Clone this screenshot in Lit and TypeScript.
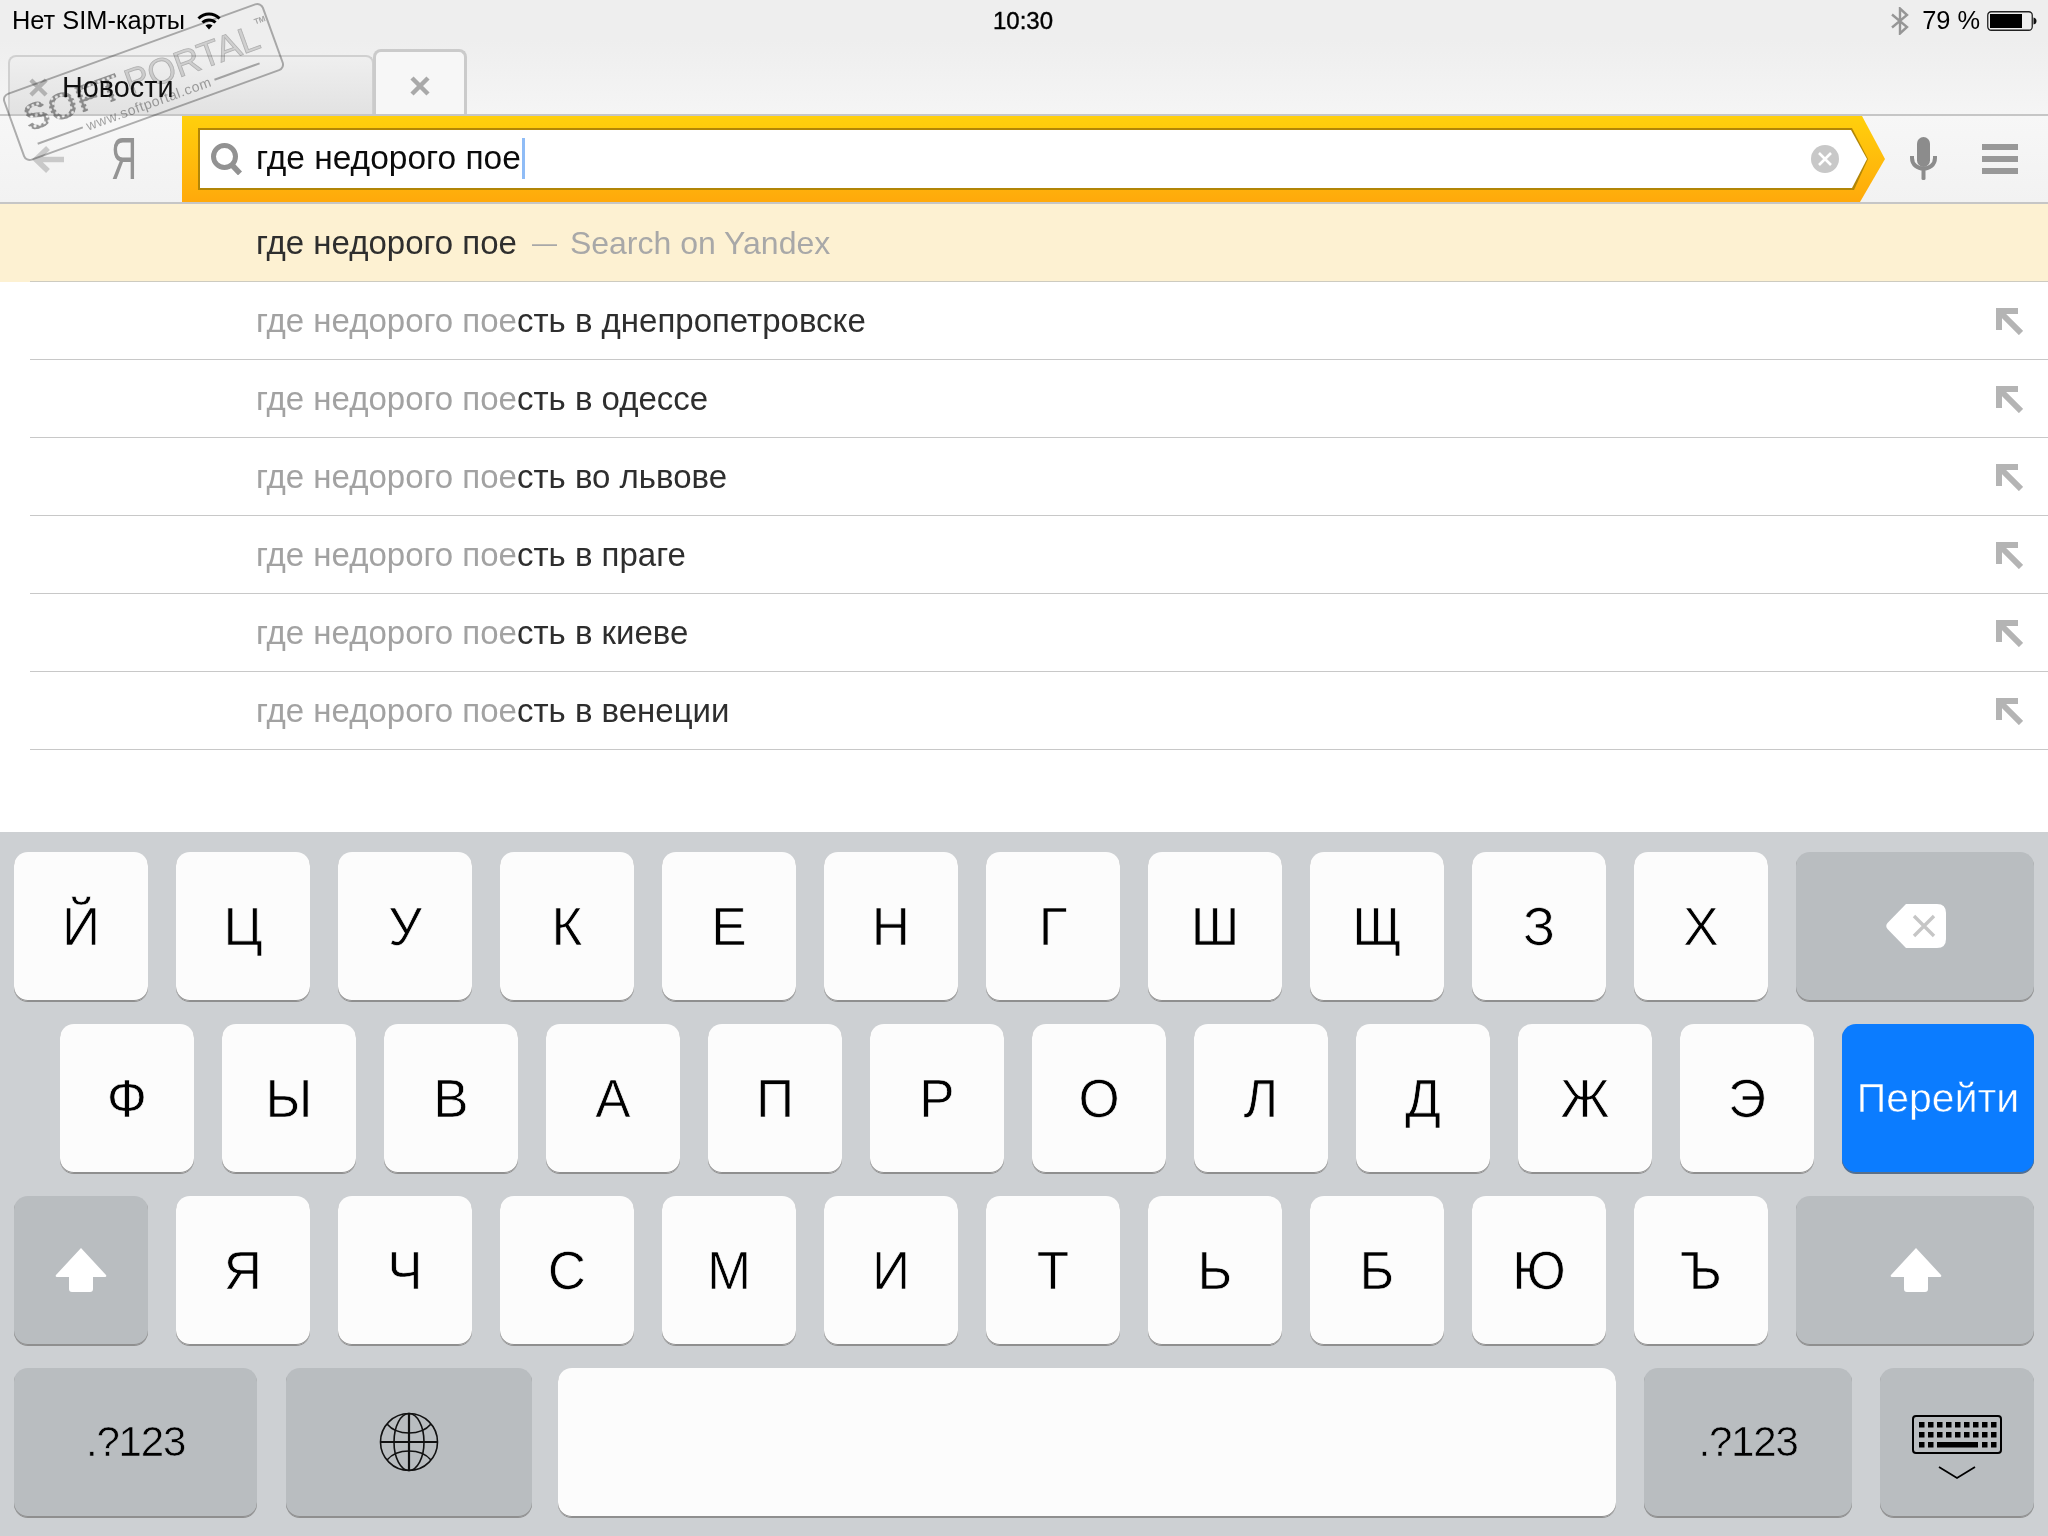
import { LitElement, html, css, svg } from "lit";
import { customElement } from "lit/decorators.js";

const suggestions = [
  "сть в днепропетровске",
  "сть в одессе",
  "сть во львове",
  "сть в праге",
  "сть в киеве",
  "сть в венеции",
];
const row1 = ["Й", "Ц", "У", "К", "Е", "Н", "Г", "Ш", "Щ", "З", "Х"];
const row2 = ["Ф", "Ы", "В", "А", "П", "Р", "О", "Л", "Д", "Ж", "Э"];
const row3 = ["Я", "Ч", "С", "М", "И", "Т", "Ь", "Б", "Ю", "Ъ"];

const shiftIcon = svg`<svg width="52" height="46" viewBox="0 0 52 46"><path fill="#fff" d="M26 1 L51 28 Q52 30 50 30 H38 V42 Q38 45 35 45 H17 Q14 45 14 42 V30 H2 Q0 30 1 28 Z"/></svg>`;

@customElement("app-root")
export class AppRoot extends LitElement {
  static styles = css`
    :host { display: block; width: 2048px; height: 1536px; position: relative; overflow: hidden; background: #fff; font-family: "Liberation Sans", Arial, sans-serif; color: #000; }
    .page { display: flex; flex-direction: column; height: 1536px; }
    .chrome { height: 114px; flex: none; background: linear-gradient(#eeeeee, #eeeeee 40px, #f5f5f5); display: flex; flex-direction: column; border-bottom: 2px solid #c6c6c6; }
    .status { height: 41px; flex: none; padding: 0 11px 0 12px; display: grid; grid-template-columns: 1fr auto 1fr; align-items: center; font-size: 25.4px; }
    .status-left, .status-right { display: flex; align-items: center; }
    .status-left { gap: 12px; }
    .status-right { justify-content: flex-end; }
    .time { font-size: 24px; -webkit-text-stroke: 0.4px #000; padding-right: 3px; }
    .pct { margin: 0 7px 0 12px; font-size: 25.4px; }
    .tabs { flex: 1; display: flex; align-items: flex-end; padding-left: 8px; }
    .tab { box-sizing: border-box; height: 59px; width: 366px; border: 2px solid #d0d0d0; border-bottom: none; border-radius: 8px 8px 0 0; background: linear-gradient(#efefef, #e2e2e2); display: flex; align-items: center; padding: 4px 0 0 19px; gap: 14px; font-size: 28.8px; color: #111; }
    .tab.active { width: 94px; height: 65px; margin-left: -1px; border: 3px solid #cbcbcb; border-bottom: none; background: #f7f7f7; justify-content: center; padding: 5px 0 0; }
    .toolbar { height: 86px; flex: none; display: flex; background: linear-gradient(#f7f7f7, #f2f2f2); border-bottom: 2px solid #c6c6c6; }
    .nav { width: 182px; flex: none; display: flex; align-items: center; padding-left: 32px; box-sizing: border-box; gap: 47px; }
    .logo { display: block; width: 21px; font-size: 60px; line-height: 46px; color: #949494; transform: scaleX(0.6); transform-origin: left center; }
    .search { width: 1703px; flex: none; box-sizing: border-box; padding: 12px 17px 12px 16px; background: linear-gradient(#ffd00c, #ffa90b); clip-path: polygon(0 0, 1680px 0, 100% 50%, 1678px 100%, 0 100%); }
    .rim { height: 62px; padding: 2px 0 2px 2px; box-sizing: border-box; background: #b28607; clip-path: polygon(0 0, 1654px 0, 100% 50%, 1656px 100%, 0 100%); }
    .field { height: 58px; padding: 0 29px 0 11px; box-sizing: border-box; background: #fff; display: flex; align-items: center; clip-path: polygon(0 0, 1651px 0, 1667px 50%, 1652px 100%, 0 100%); font-size: 33.5px; }
    .query { margin-left: 14px; flex: 1; display: flex; align-items: center; color: #0b0b0b; padding-bottom: 2px; }
    .caret { width: 3px; height: 41px; background: #8fbcf6; margin-left: 1px; }
    .tools { flex: 1; display: flex; align-items: center; padding-left: 25px; gap: 45px; }
    .menu { width: 36px; display: flex; flex-direction: column; gap: 6px; }
    .menu i { display: block; height: 6px; background: #989898; }
    .list { flex: 1; }
    .row-wrap.hit { background: #fdf1d2; }
    .row { height: 78px; box-sizing: border-box; margin-left: 30px; padding: 1px 25px 0 226px; border-bottom: 1px solid #c8c8c8; display: flex; align-items: center; justify-content: space-between; font-size: 33px; color: #2e2e2e; }
    .row-wrap.hit .row { border-bottom-color: #cdcbc0; }
    .muted { color: #a2a2a2; }
    .dash { color: #a8a8a8; margin: 0 13px 0 15px; font-size: 25px; vertical-align: 2px; }
    .yandex { color: #a8a8a8; font-size: 32px; }
    .keyboard { height: 704px; flex: none; box-sizing: border-box; background: #cdd0d3; padding: 20px 14px 0; display: flex; flex-direction: column; gap: 23px; }
    .keys { display: flex; gap: 28px; height: 149px; }
    .keys.second { padding-left: 46px; }
    .key { box-sizing: border-box; width: 134px; height: 149px; flex: none; border-radius: 14px; background: #fcfcfc; box-shadow: inset 0 -1px 0 #8f8f8f, 0 1px 0 #8f8f8f; display: flex; align-items: center; justify-content: center; font-size: 53px; padding-bottom: 1px; -webkit-text-stroke: 0.7px #fcfcfc; }
    .dark { background: #b9bdc0; -webkit-text-stroke: 0.6px #b9bdc0; }
    .wide { width: 238px; }
    .wide svg { margin-left: 2px; }
    .go { width: 192px; background: #0b7cff; color: #fff; font-size: 41px; box-shadow: inset 0 -1px 0 #5a6f88, 0 1px 0 #5a6f88; -webkit-text-stroke: 0.5px #0b7cff; }
    .sym { font-size: 42px; letter-spacing: -1.2px; }
    .w-sym1 { width: 243px; }
    .w-globe { width: 246px; margin: 0 -2px 0 1px; }
    .w-space { width: 1058px; }
    .w-sym2 { width: 208px; }
    .w-hide { width: 154px; flex-direction: column; gap: 12px; padding-top: 10px; }
    .stamp { position: absolute; left: 5px; top: 46px; width: 277px; height: 72px; box-sizing: border-box; border: 2px solid rgba(160,160,160,0.8); border-radius: 7px; transform: rotate(-19.9deg); pointer-events: none; padding: 11px 0 0 12px; mix-blend-mode: multiply; }
    .brand { display: flex; align-items: baseline; line-height: 36px; font-size: 38px; }
    .soft { font-weight: 700; color: transparent; background: radial-gradient(circle at 50% 50%, #fff 1.1px, #9a9a9a 1.8px); background-size: 5px 5px; -webkit-background-clip: text; background-clip: text; }
    .portal { color: #dedede; -webkit-text-stroke: 0.8px #bdbdbd; font-size: 36px; margin-left: 6px; }
    .tm { color: #b0b0b0; font-size: 8px; line-height: 10px; align-self: flex-start; margin-left: 1px; font-weight: 700; }
    .url { display: flex; align-items: center; gap: 4px; margin: 1px 0 0 4px; font-size: 14px; line-height: 14px; color: #a8a8a8; letter-spacing: 0.6px; white-space: nowrap; }
    .url i { display: block; height: 1.5px; width: 48px; flex: none; background: #b0b0b0; }
  `;

  private x(size: number, colour: string, weight: number) {
    return html`<svg width=${size} height=${size} viewBox="0 0 20 20"><path d="M2 2 L18 18 M18 2 L2 18" stroke=${colour} stroke-width=${weight} fill="none"/></svg>`;
  }

  private arrow() {
    return html`<svg width="27" height="27" viewBox="0 0 27 27"><path fill="none" stroke="#b4b4b4" stroke-width="6" d="M22 3 H3 V22 M3 3 L25 25"/></svg>`;
  }

  private keyLabel(k: string) {
    return html`<div class="key">${k}</div>`;
  }

  render() {
    return html`
      <div class="page">
        <div class="chrome">
          <div class="status">
            <div class="status-left">
              <span>Нет SIM-карты</span>
              <svg width="24" height="18" viewBox="0 0 24 18"><g fill="none" stroke="#000" stroke-width="3"><path d="M1.5 6.5 C7.5 0.5 16.5 0.5 22.5 6.5"/><path d="M5.5 10.5 C9 7 15 7 18.5 10.5"/></g><path d="M8.5 13.5 C10.5 11.8 13.5 11.8 15.5 13.5 L12 17.5 Z" fill="#000"/></svg>
            </div>
            <div class="time">10:30</div>
            <div class="status-right">
              <svg width="20" height="28" viewBox="0 0 20 28"><path fill="none" stroke="#969696" stroke-width="2.4" d="M2 7.5 L17 20 L10 26.5 V1.5 L17 8 L2 20.5"/></svg>
              <span class="pct">79 %</span>
              <svg width="50" height="20" viewBox="0 0 50 20"><rect x="0.75" y="0.75" width="44.5" height="18.5" rx="3.5" fill="none" stroke="#222" stroke-width="1.3"/><rect x="3" y="3" width="32" height="14" fill="#000"/><path d="M46.5 6.5 Q49.5 7 49.5 10 Q49.5 13 46.5 13.5 Z" fill="#111"/></svg>
            </div>
          </div>
          <div class="tabs">
            <div class="tab">${this.x(19, "#b2b2b2", 4.5)}<span>Новости</span></div>
            <div class="tab active">${this.x(20, "#a9a9a9", 4.5)}</div>
          </div>
        </div>

        <div class="toolbar">
          <div class="nav">
            <svg width="32" height="27" viewBox="0 0 32 27"><path fill="none" stroke="#c9c9c9" stroke-width="5.5" d="M32 13.5 H5 M16 2 L4 13.5 L16 25"/></svg>
            <span class="logo">Я</span>
          </div>
          <div class="search">
            <div class="rim">
              <div class="field">
                <svg width="31" height="32" viewBox="0 0 31 32"><circle cx="13.5" cy="13.5" r="11" fill="none" stroke="#929292" stroke-width="5"/><path d="M21 22 L29 30.5" stroke="#929292" stroke-width="5.5" fill="none"/></svg>
                <div class="query"><span>где недорого пое</span><span class="caret"></span></div>
                <svg width="28" height="28" viewBox="0 0 28 28"><circle cx="14" cy="14" r="14" fill="#c8c8c8"/><path d="M8 8 L20 20 M20 8 L8 20" stroke="#fff" stroke-width="2.6" fill="none"/></svg>
              </div>
            </div>
          </div>
          <div class="tools">
            <svg width="27" height="44" viewBox="0 0 27 44"><rect x="7" y="0" width="13" height="30" rx="6.5" fill="#8c8c8c"/><path d="M2 19 V21 C2 35 25 35 25 21 V19" fill="none" stroke="#8c8c8c" stroke-width="4"/><rect x="11.5" y="30" width="4" height="13" rx="1.5" fill="#8c8c8c"/></svg>
            <div class="menu"><i></i><i></i><i></i></div>
          </div>
        </div>

        <div class="list">
          <div class="row-wrap hit">
            <div class="row"><span>где недорого пое<span class="dash">—</span><span class="yandex">Search on Yandex</span></span></div>
          </div>
          ${suggestions.map(
            (s) => html`<div class="row-wrap"><div class="row"><span><span class="muted">где недорого пое</span>${s}</span>${this.arrow()}</div></div>`
          )}
        </div>

        <div class="keyboard">
          <div class="keys">
            ${row1.map((k) => this.keyLabel(k))}
            <div class="key dark wide">
              <svg width="60" height="44" viewBox="0 0 60 44"><path fill="#fff" d="M20 0 H51 Q60 0 60 9 V35 Q60 44 51 44 H20 L1.5 25 Q-1 22 1.5 19 Z"/><path d="M28 12 L48 32 M48 12 L28 32" stroke="#c6c6c6" stroke-width="3.4" fill="none"/></svg>
            </div>
          </div>
          <div class="keys second">
            ${row2.map((k) => this.keyLabel(k))}
            <div class="key go">Перейти</div>
          </div>
          <div class="keys">
            <div class="key dark">${shiftIcon}</div>
            ${row3.map((k) => this.keyLabel(k))}
            <div class="key dark wide">${shiftIcon}</div>
          </div>
          <div class="keys">
            <div class="key dark sym w-sym1">.?123</div>
            <div class="key dark w-globe">
              <svg width="60" height="60" viewBox="0 0 60 60"><g fill="none" stroke="#111" stroke-width="1.6"><circle cx="30" cy="30" r="28.5"/><ellipse cx="30" cy="30" rx="15" ry="28.5"/><path d="M1.5 30 H58.5" stroke-width="2.2"/><path d="M30 1.5 V58.5" stroke-width="2.2"/><path d="M8 12 C18 24 42 24 52 12"/><path d="M8 48 C18 36 42 36 52 48"/></g></svg>
            </div>
            <div class="key w-space"></div>
            <div class="key dark sym w-sym2">.?123</div>
            <div class="key dark w-hide">
              <svg width="90" height="39" viewBox="0 0 90 39"><rect x="1" y="1" width="88" height="37" rx="3" fill="none" stroke="#000" stroke-width="2"/>
                ${[0, 1, 2].map((r) => [0, 1, 2, 3, 4, 5, 6, 7, 8].map((c) =>
                  r === 2 && c > 1 && c < 7 ? null : svg`<rect x=${7 + c * 9} y=${7 + r * 10} width="5.5" height="5.5" fill="#000"/>`
                ))}
                <rect x="25" y="27" width="41" height="5.5" fill="#000"/>
              </svg>
              <svg width="38" height="14" viewBox="0 0 38 14"><path d="M1 1 L19 12 L37 1" fill="none" stroke="#000" stroke-width="1.8"/></svg>
            </div>
          </div>
        </div>
      </div>

      <div class="stamp">
        <div class="brand"><span class="soft">SOFT</span><span class="portal">PORTAL</span><span class="tm">TM</span></div>
        <div class="url"><i></i><span>www.softportal.com</span><i></i></div>
      </div>
    `;
  }
}
